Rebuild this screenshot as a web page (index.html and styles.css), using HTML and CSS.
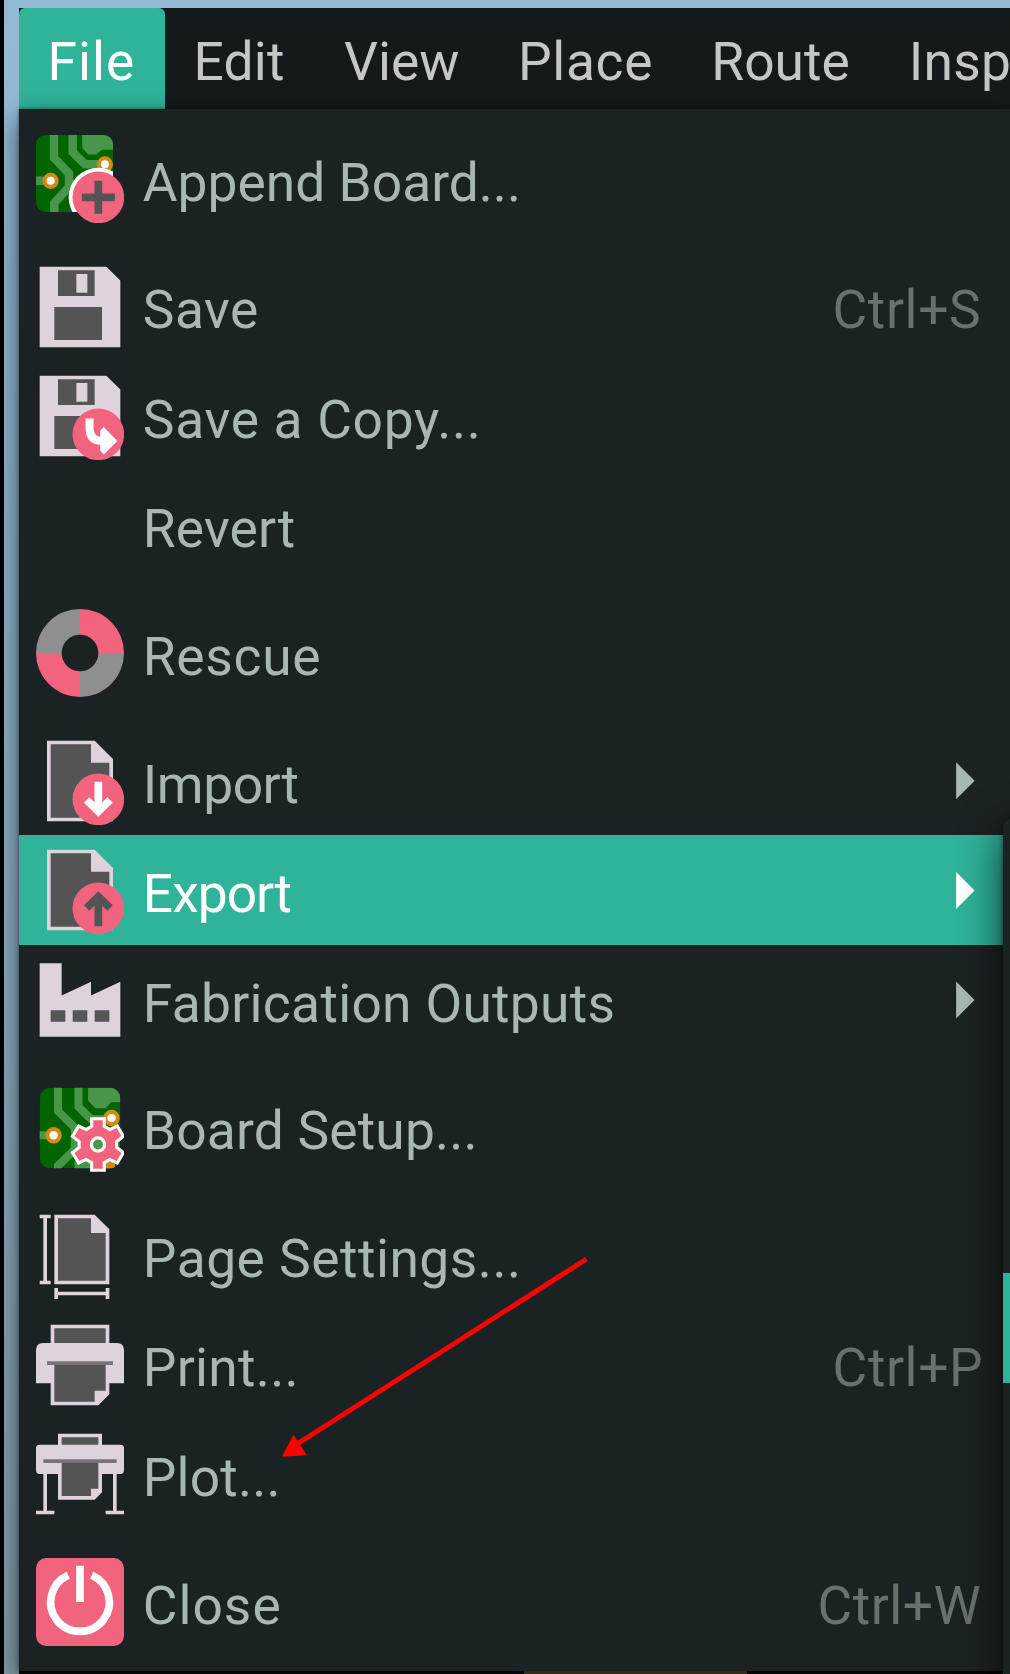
FILE: index.html
```html
<!DOCTYPE html>
<html lang="en">
<head>
<meta charset="utf-8">
<title>PCB Editor</title>
<link rel="stylesheet" href="styles.css">
</head>
<body>
<div class="desktop">
  <nav class="menubar">
    <span class="tab tab-open t10">File</span>
    <span class="tab t2">Edit</span>
    <span class="tab">View</span>
    <span class="tab t7">Place</span>
    <span class="tab">Route</span>
    <span class="tab t3">Insp</span>
  </nav>

  <div class="menu">
    <div class="item">
      <svg class="icon" viewBox="0 0 24 24">
        <clipPath id="pcb1"><rect width="21" height="21" rx="2.6"/></clipPath>
        <g clip-path="url(#pcb1)">
          <rect width="21" height="21" fill="#006400"/>
          <g fill="none" stroke="#489648" stroke-width="2.3">
            <path d="M4.9 0V6.2L9 10.5V14.2L5 18.5V21M10 0V4.7L13.4 8H18M0 12.5H3"/>
          </g>
          <path d="M12.6 0H21V4H18L16.3 5.3H14.2L12.6 3.5z" fill="#489648"/>
          <circle cx="4" cy="12.5" r="1.65" fill="#fff" stroke="#d68a14" stroke-width="1.1"/>
          <circle cx="18.8" cy="8" r="1.65" fill="#fff" stroke="#d68a14" stroke-width="1.1"/>
          <circle cx="17" cy="17" r="8.1" fill="#fff"/>
        </g>
        <circle cx="17" cy="17" r="7.05" fill="#f2647e"/>
        <path d="M17 12.5V21.5M12.5 17H21.5" stroke="#545454" stroke-width="2.1"/>
      </svg>
      <span class="label">Append Board...</span>
    </div>
    <div class="gap"></div>
    <div class="item">
      <svg class="icon" viewBox="0 0 24 24">
        <path d="M1 1H19.2L23 4.8V23H1z" fill="#ded3dd"/>
        <path d="M6 2H16V9H6zM5 12H18V21H5z" fill="#545454"/>
        <path d="M11 3H14V8.1H11z" fill="#ded3dd"/>
      </svg>
      <span class="label t5">Save</span><span class="keys t6">Ctrl+S</span>
    </div>
    <div class="item">
      <svg class="icon" viewBox="0 0 24 24">
        <path d="M1 1H19.2L23 4.8V23H1z" fill="#ded3dd"/>
        <path d="M6 2H16V9H6zM5 12H18V21H5z" fill="#545454"/>
        <path d="M11 3H14V8.1H11z" fill="#ded3dd"/>
        <circle cx="17" cy="17" r="7.05" fill="#f2647e"/>
        <path d="M14.6 12.7V15.6Q14.8 18.8 18 18.8H20" fill="none" stroke="#fff" stroke-width="2.2"/>
        <path d="M18.5 15L22.2 18.8L18.5 22.5L17.5 21.5V16z" fill="#fff"/>
      </svg>
      <span class="label t7">Save a Copy...</span>
    </div>
    <div class="item"><span class="icon"></span><span class="label t2">Revert</span></div>
    <div class="gap"></div>
    <div class="item">
      <svg class="icon" viewBox="0 0 24 24">
        <path d="M12 0A12 12 0 0 0 0 12H7A5 5 0 0 1 12 7zM24 12A12 12 0 0 1 12 24V17A5 5 0 0 0 17 12z" fill="#8f8f8f"/>
        <path d="M12 0A12 12 0 0 1 24 12H17A5 5 0 0 0 12 7zM0 12A12 12 0 0 0 12 24V17A5 5 0 0 1 7 12z" fill="#f2647e"/>
      </svg>
      <span class="label t7">Rescue</span>
    </div>
    <div class="gap"></div>
    <div class="item">
      <svg class="icon" viewBox="0 0 24 24">
        <path d="M3 1H16L21 6V23H3z" fill="#ded3dd"/>
        <path d="M4 2H15V7H20V22H4z" fill="#545454"/>
        <circle cx="17" cy="17" r="7.05" fill="#f2647e"/>
        <path d="M17 12.2V20.5M13.8 17.2L17 20.3L20.2 17.2" fill="none" stroke="#fff" stroke-width="2.1"/>
      </svg>
      <span class="label tm4">Import</span><i class="more"></i>
    </div>
    <div class="item item-active">
      <svg class="icon" viewBox="0 0 24 24">
        <path d="M3 1H16L21 6V23H3z" fill="#ded3dd"/>
        <path d="M4 2H15V7H20V22H4z" fill="#545454"/>
        <circle cx="17" cy="17" r="7.05" fill="#f2647e"/>
        <path d="M17 21.9V13.6M13.8 16.9L17 13.8L20.2 16.9" fill="none" stroke="#545454" stroke-width="2.1"/>
      </svg>
      <span class="label tm9">Export</span><i class="more"></i>
    </div>
    <div class="item">
      <svg class="icon" viewBox="0 0 24 24">
        <path d="M1 2H7V10.8L15 7V10.8L23 7V22H1z" fill="#ded3dd"/>
        <path d="M4 14.8H8V17.9H4zM10 14.8H14V17.9H10zM16 14.8H20V17.9H16z" fill="#545454"/>
      </svg>
      <span class="label t3">Fabrication Outputs</span><i class="more"></i>
    </div>
    <div class="gap"></div>
    <div class="item">
      <svg class="icon" viewBox="0 0 24 24">
        <clipPath id="pcb2"><rect x="1" y="1" width="22" height="22" rx="2.8"/></clipPath>
        <g clip-path="url(#pcb2)">
          <rect x="1" y="1" width="22" height="22" fill="#006400"/>
          <g fill="none" stroke="#489648" stroke-width="2.2">
            <path d="M6 0V7.4L10.6 12V17.8L6 22.3V24M11.6 0V6.2L15 9.6H19M0 14H4M10.5 22.2H20"/>
          </g>
          <path d="M14.2 1H23V5H20.5L19 6.6H16.2L14.2 4.6z" fill="#489648"/>
          <circle cx="4.8" cy="14" r="1.7" fill="#fff" stroke="#d68a14" stroke-width="1.1"/>
          <circle cx="20.6" cy="9.3" r="1.7" fill="#fff" stroke="#d68a14" stroke-width="1.1"/>
          <circle cx="19.8" cy="22" r="1.8" fill="#d68a14"/>
        </g>
        <g transform="translate(16.9 16.5)">
          <path d="M-1.3 -6.6H1.3V-4.7L3.2 -3.6L5.1 -4.5L6.4 -2.3L4.7 -1V1L6.4 2.3L5.1 4.5L3.2 3.6L1.3 4.7V6.6H-1.3V4.7L-3.2 3.6L-5.1 4.5L-6.4 2.3L-4.7 1V-1L-6.4 -2.3L-5.1 -4.5L-3.2 -3.6L-1.3 -4.7z" fill="#f2647e" stroke="#fff" stroke-width="1.7" paint-order="stroke"/>
          <circle r="1.8" fill="#489648" stroke="#fff" stroke-width=".9"/>
        </g>
      </svg>
      <span class="label t2">Board Setup...</span>
    </div>
    <div class="gap"></div>
    <div class="item">
      <svg class="icon" viewBox="0 0 24 24">
        <path d="M5 1H16L20 5V20H5zM1 1H4V2H3V19H4V20H1V19H2V2H1zM5 21H6V22H19V21H20V24H19V23H6V24H5z" fill="#ded3dd"/>
        <path d="M6 2H15V6H19V19H6z" fill="#545454"/>
      </svg>
      <span class="label t5">Page Settings...</span>
    </div>
    <div class="item">
      <svg class="icon" viewBox="0 0 24 24">
        <path d="M4 1H20V6H22Q24 6 24 8V17H20V20L17 23H4V17H0V8Q0 6 2 6H4z" fill="#ded3dd"/>
        <path d="M5 2H19V6H5zM5 12H19V19H16V22H5z" fill="#545454"/>
        <path d="M3 11H21V12H3z" fill="#777476"/>
      </svg>
      <span class="label t3">Print...</span><span class="keys keys-p t6">Ctrl+P</span>
    </div>
    <div class="item">
      <svg class="icon" viewBox="0 0 24 24">
        <path d="M6 1H18V4H23Q24 4 24 5V11Q24 12 23 12H22V22H24V23H19V22H21V12H18V17L16 19H6V12H3V22H5V23H0V22H2V12H1Q0 12 0 11V5Q0 4 1 4H6z" fill="#ded3dd"/>
        <path d="M7 2H17V4H7zM7 9H17V16H15V18H7z" fill="#545454"/>
        <path d="M2 8H22V9H2z" fill="#777476"/>
      </svg>
      <span class="label t2">Plot...</span>
    </div>
    <div class="gap"></div>
    <div class="item">
      <svg class="icon" viewBox="0 0 24 24">
        <rect width="24" height="24" rx="2.8" fill="#f2647e"/>
        <path d="M8.8 4.7A8 8 0 1 0 15.2 4.7M12 2.1V12" fill="none" stroke="#fff" stroke-width="2.1"/>
      </svg>
      <span class="label t10">Close</span><span class="keys t5">Ctrl+W</span>
    </div>
  </div>

  <div class="canvas-edge"><i class="track"></i></div>

  <div class="submenu"><div class="submenu-active"></div></div>
  <svg class="pointer" viewBox="0 0 314 204">
    <path d="M310.5 2L18 189" stroke="#f00" stroke-width="5"/>
    <path d="M5.8 199.7L17.5 177.7L30.8 198.3z" fill="#f00"/>
  </svg>
</div>
</body>
</html>
```
FILE: styles.css
```css
* { box-sizing: border-box; }

body { margin: 0; background: #000; }

.desktop {
  position: relative;
  width: 1010px;
  height: 1674px;
  padding: 7.5px 0 0 14.6px;
  overflow: hidden;
  border-left: 4px solid #000;
  background: linear-gradient(#93b9d4 0, #90b8d4 300px, #8badc2 1000px, #829ca9 1674px);
  color: #a9b7b4;
  font: 53.33px/62px Roboto, sans-serif;
  white-space: nowrap;
}

.menubar {
  display: grid;
  grid-template-columns: 146px 150.4px 173.9px 193.4px 197.4px 1fr;
  height: 101.8px;
  overflow: hidden;
  background: #14191b;
  color: #c3c8c6;
}

.tab { padding: 23.5px 0 0 29px; }

.tab-open {
  border-radius: 6px 6px 0 0;
  background: #2fb399;
  color: #fff;
}

.menu {
  position: relative;
  width: 992px;
  height: 1561.6px;
  padding: 14.7px 0;
  background: #1b2224;
  box-shadow: 0 0 3px rgba(0, 0, 0, .5), 0 10px 26px rgba(0, 0, 0, .6);
}

.item {
  display: flex;
  width: 984.7px;
  height: 109.62px;
  padding: 11px 22px 0 17.8px;
}

.item-active { background: #2fb399; color: #fff; }

.gap { height: 17.95px; }

.icon { flex: none; width: 88px; height: 88px; margin-right: 18.4px; }

.label { flex: 1; padding-top: 16.7px; }

.keys { padding-top: 16.7px; color: #69716f; }

.keys-p { margin-right: -2px; }

.more {
  width: 18.5px;
  height: 37px;
  margin: 25.5px 6.7px 0 0;
  background: currentColor;
  clip-path: polygon(0 0, 100% 50%, 0 100%);
}

.canvas-edge { position: relative; display: flex; height: 4px; background: #030506; }

.track { width: 223px; margin-left: 505px; background: #3b2a0c; }

.submenu {
  position: absolute;
  left: 999.3px;
  top: 819px;
  width: 300px;
  height: 1000px;
  padding-top: 454px;
  border-radius: 7px 0 0 0;
  background: #1b2224;
  box-shadow: 0 0 4px rgba(0, 0, 0, .5), 0 10px 42px rgba(0, 0, 0, .75);
}

.submenu-active { height: 110px; background: #2fb399; }

.pointer { position: absolute; left: 272.4px; top: 1257px; width: 314px; height: 204px; overflow: visible; }

/* tracking steps, in tenths of a pixel */
.tm9 { letter-spacing: -.95px; }
.tm4 { letter-spacing: -.45px; }
.t2 { letter-spacing: .18px; }
.t3 { letter-spacing: .3px; }
.t5 { letter-spacing: .5px; }
.t6 { letter-spacing: .6px; }
.t7 { letter-spacing: .7px; }
.t10 { letter-spacing: 1px; }
```
